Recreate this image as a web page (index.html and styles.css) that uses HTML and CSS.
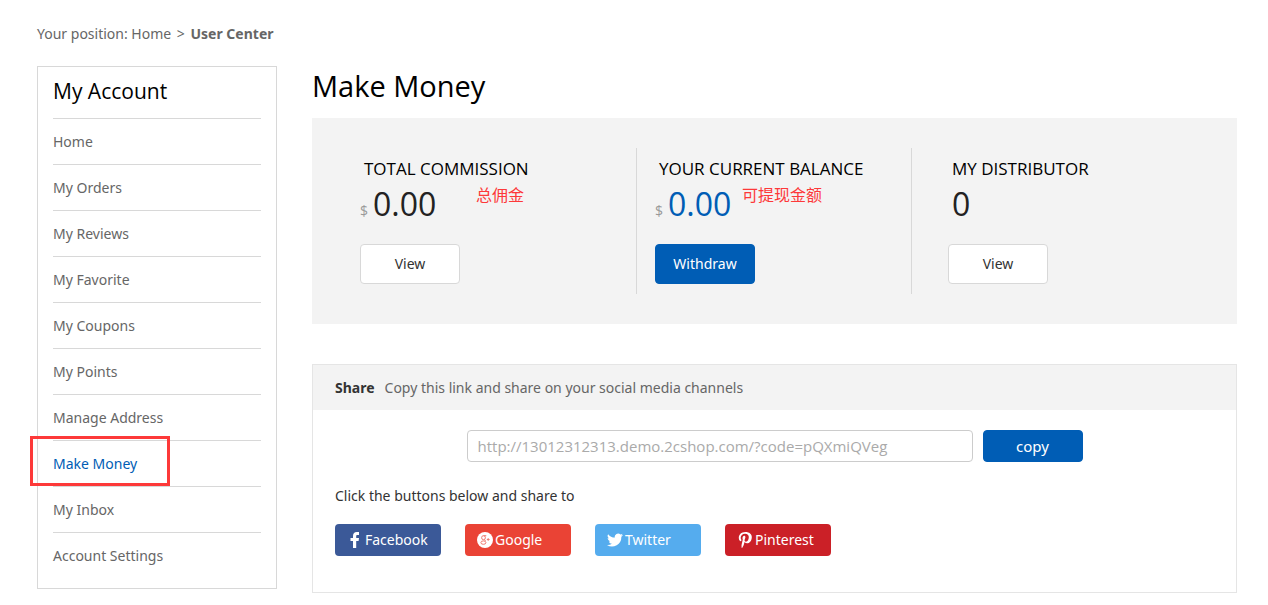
FILE: index.html
```html
<!DOCTYPE html>
<html lang="en">
<head>
<meta charset="utf-8">
<title>Make Money - User Center</title>
<link rel="stylesheet" href="styles.css">
</head>
<body>
<div class="page">
  <nav class="crumbs" aria-label="Breadcrumb">Your position: <a href="#">Home</a> <span class="sep">&gt;</span> <b>User Center</b></nav>
  <div class="columns">
    <aside class="sidebar">
      <h2 class="sidebar-title">My Account</h2>
      <ul class="menu">
        <li><a href="#">Home</a></li>
        <li><a href="#">My Orders</a></li>
        <li><a href="#">My Reviews</a></li>
        <li><a href="#">My Favorite</a></li>
        <li><a href="#">My Coupons</a></li>
        <li><a href="#">My Points</a></li>
        <li><a href="#">Manage Address</a></li>
        <li class="current"><a href="#" aria-current="page">Make Money</a></li>
        <li><a href="#">My Inbox</a></li>
        <li><a href="#">Account Settings</a></li>
      </ul>
    </aside>
    <main class="main">
      <h1 class="title">Make Money</h1>
      <section class="stats">
        <div class="stat">
          <h3 class="stat-label">TOTAL COMMISSION</h3>
          <p class="stat-value"><small>$</small>0.00</p>
          <span class="note note-total" lang="zh-CN">总佣金</span>
          <button class="btn" type="button">View</button>
        </div>
        <div class="stat stat-balance">
          <h3 class="stat-label">YOUR CURRENT BALANCE</h3>
          <p class="stat-value"><small>$</small>0.00</p>
          <span class="note note-balance" lang="zh-CN">可提现金额</span>
          <button class="btn btn-primary" type="button">Withdraw</button>
        </div>
        <div class="stat stat-distributor">
          <h3 class="stat-label">MY DISTRIBUTOR</h3>
          <p class="stat-value">0</p>
          <button class="btn" type="button">View</button>
        </div>
      </section>
      <section class="share">
        <header class="share-head"><b>Share</b><label for="link">Copy this link and share on your social media channels</label></header>
        <div class="share-body">
          <div class="copy-row">
            <input id="link" class="link" type="text" readonly value="http://13012312313.demo.2cshop.com/?code=pQXmiQVeg">
            <button class="btn btn-primary btn-copy" type="button">copy</button>
          </div>
          <p class="hint">Click the buttons below and share to</p>
          <div class="socials">
            <button class="social facebook" type="button">
              <svg viewBox="0 0 16 16" aria-hidden="true"><path d="M6 16V9H3.500V6H6V4C6 1.300 7.500 0 9.700 0h2.300v3h-1.500C9.500 3 9.200 3.400 9.200 4.300V6H12l-.4 3H9.200v7z"/></svg>Facebook</button>
            <button class="social google" type="button">
              <svg viewBox="0 0 16 16" aria-hidden="true"><circle cx="8" cy="8" r="8"/><g class="mark"><ellipse cx="6.500" cy="5.700" rx="1.900" ry="2"/><path d="M6.500 3.700h2.800M7.500 7.700l1 1.200"/><ellipse cx="6.400" cy="10.600" rx="2.500" ry="1.700"/><path d="M9.800 7.500h2.800M11.200 6.100v2.800"/></g></svg>Google</button>
            <button class="social twitter" type="button">
              <svg viewBox="0 0 24 24" aria-hidden="true"><path d="M24 4.600a10 10 0 0 1-2.800.8 4.900 4.900 0 0 0 2.100-2.700 10 10 0 0 1-3.100 1.200 4.900 4.900 0 0 0-8.400 4.500A14 14 0 0 1 1.700 3.200a4.900 4.900 0 0 0 1.500 6.500 5 5 0 0 1-2.200-.6c0 2.300 1.600 4.400 3.900 4.900a5 5 0 0 1-2.200.1 4.900 4.900 0 0 0 4.600 3.400A9.900 9.900 0 0 1 0 19.500 14 14 0 0 0 21.500 7.100 10 10 0 0 0 24 4.600z"/></svg>Twitter</button>
            <button class="social pinterest" type="button">
              <svg viewBox="0 0 16 16" aria-hidden="true"><path d="M8.400 0C4 0 1.800 3 1.800 5.700c0 1.600.6 3 1.900 3.500.2.100.4 0 .5-.2l.2-.8c.1-.2 0-.3-.1-.5-.4-.5-.6-1-.6-1.900 0-2.300 1.700-4.100 4.400-4.100 2.400 0 3.700 1.400 3.700 3.400 0 2.600-1.100 4.700-2.800 4.700-.9 0-1.600-.8-1.400-1.700.3-1.100.8-2.300.8-3.100 0-.7-.4-1.300-1.200-1.300-.9 0-1.700 1-1.700 2.300 0 .8.300 1.400.3 1.400l-1.100 4.800c-.4 1.500 0 3.300 0 3.800h.3c.2-.2 1.400-2 1.800-3.300l.7-2.600c.3.600 1.300 1.200 2.300 1.200 3 0 5-2.700 5-6.400C14.800 2.200 12.400 0 8.400 0z"/></svg>Pinterest</button>
          </div>
        </div>
      </section>
    </main>
  </div>
</div>
</body>
</html>
```
FILE: styles.css
```css
*, *::after { box-sizing: border-box; }

body {
  margin: 0;
  background: #fff;
  color: #666;
  font: 14px/20px "Noto Sans", "Noto Sans CJK SC", sans-serif;
}

h1, h2, h3, p, ul { margin: 0; padding: 0; font-weight: 400; }
h1, h2, h3 { font-family: "Open Sans", sans-serif; }
a { color: inherit; text-decoration: none; }
button, input { font: inherit; }

.page { padding: 24px 31px 12px 37px; }
.sep { margin: 0 2px; }
.columns { display: flex; align-items: flex-start; gap: 35px; margin-top: 22px; }

.sidebar { flex: 0 0 240px; padding: 0 15px 10px; border: 1px solid #d8d8d8; }
.sidebar-title { padding: 8px 0 11px; color: #000; font-size: 21px; line-height: 32px; }
.menu { list-style: none; }
.menu li { position: relative; border-top: 1px solid #d8d8d8; }
.menu a { display: block; line-height: 45px; }
.menu .current { color: #005db5; }
.current::after {
  content: "";
  position: absolute;
  top: -5px;
  left: -23px;
  width: 140px;
  height: 50px;
  border: 3px solid #fd3939;
  pointer-events: none;
}

.main { flex: 1; min-width: 0; }
.title { color: #000; font-size: 29px; line-height: 40px; margin-bottom: 12px; }

.stats { display: grid; grid-template-columns: 13fr 11fr 13fr; padding: 30px 0; background: #f3f3f3; }
.stat { position: relative; padding: 10px 0 10px 48px; }
.stat + .stat { padding-left: 36px; }
.stat:not(:last-child) { border-right: 1px solid #d8d8d8; }
.stats .stat-balance { padding-left: 18px; }
.stat-label { padding-left: 4px; color: #000; font-size: 17px; line-height: 22px; }
.stat-value { margin-bottom: 16px; color: #222; font: 32px/48px "Open Sans", sans-serif; }
.stat-value small { margin-right: 5px; color: #999; font-size: 14px; line-height: 16px; }
.stat-balance .stat-value { color: #005db5; }
.stat-distributor .stat-value { padding-left: 4px; }
.note { position: absolute; top: 35px; color: #fd3939; font: 16px/22px "Noto Sans CJK SC", sans-serif; }
.note-total { left: 164px; }
.note-balance { left: 105px; }

.btn {
  display: block;
  width: 100px;
  height: 40px;
  padding: 0;
  border: 1px solid #d8d8d8;
  border-radius: 4px;
  background: #fff;
  color: #333;
}
.btn-primary { border-color: #005db5; background: #005db5; color: #fff; }

.share { margin-top: 40px; border: 1px solid #e5e5e5; }
.share-head { display: flex; gap: 10px; padding: 0 22px; background: #f3f3f3; line-height: 45px; }
.share-head b { color: #333; }
.share-body { padding: 20px 22px 36px; }
.copy-row { display: flex; justify-content: center; gap: 10px; }
.link {
  flex: 0 1 506px;
  min-width: 0;
  height: 32px;
  padding: 0 10px;
  border: 1px solid #ccc;
  border-radius: 4px;
  color: #aaa;
  font: 15px "Open Sans", sans-serif;
}
.btn-copy { height: 32px; font-size: 15px; }
.hint { margin: 24px 0 18px; color: #333; }
.socials { display: flex; flex-wrap: wrap; gap: 24px; }
.social {
  display: flex;
  align-items: center;
  gap: 2px;
  width: 106px;
  height: 32px;
  padding: 0 12px;
  border: 0;
  border-radius: 4px;
  color: #fff;
}
.social svg { flex: none; width: 16px; height: 16px; fill: #fff; }
.facebook { background: #3b5998; }
.google { background: #ea4335; }
.google .mark { fill: none; stroke: #ea4335; stroke-width: 1; opacity: .7; }
.twitter { background: #55acee; }
.pinterest { background: #cb2027; }
```
